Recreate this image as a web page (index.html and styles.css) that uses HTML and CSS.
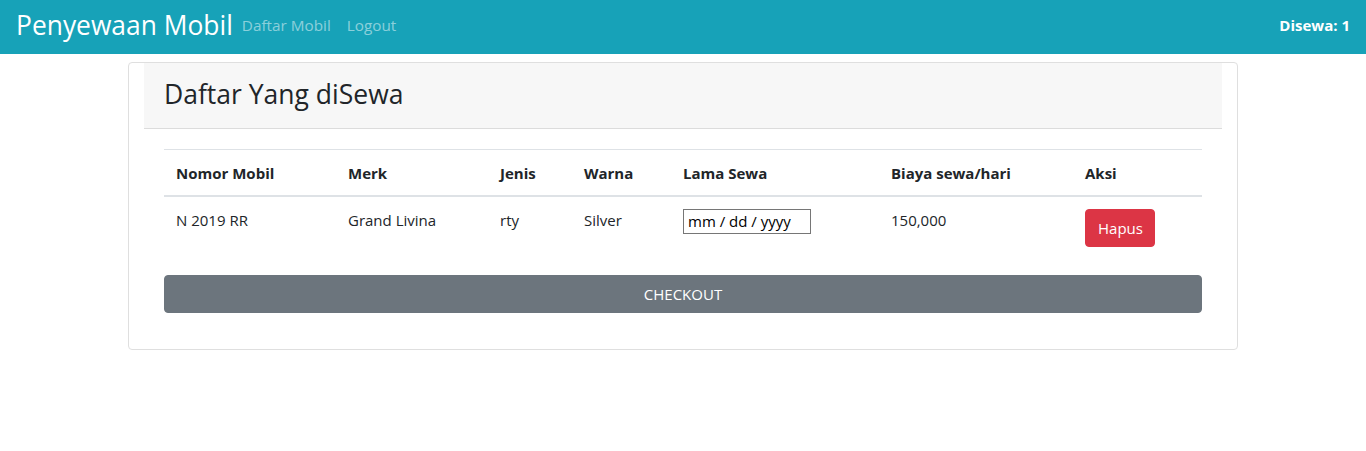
FILE: index.html
```html
<!DOCTYPE html>
<html lang="id">
<head>
<meta charset="utf-8">
<title>Penyewaan Mobil</title>
<link rel="stylesheet" href="styles.css">
</head>
<body>
<nav class="navbar">
  <a class="brand" href="#">Penyewaan Mobil</a>
  <a class="nav-link" href="#">Daftar Mobil</a>
  <a class="nav-link" href="#">Logout</a>
  <span class="spacer"></span>
  <span class="rented">Disewa: 1</span>
</nav>
<main class="container">
  <section class="card">
    <header class="card-header">
      <h3 class="card-title">Daftar Yang diSewa</h3>
    </header>
    <div class="card-body">
      <table class="table">
        <thead>
          <tr>
            <th class="c1">Nomor Mobil</th>
            <th class="c2">Merk</th>
            <th class="c3">Jenis</th>
            <th class="c4">Warna</th>
            <th class="c5">Lama Sewa</th>
            <th class="c6">Biaya sewa/hari</th>
            <th class="c7">Aksi</th>
          </tr>
        </thead>
        <tbody>
          <tr>
            <td>N 2019 RR</td>
            <td>Grand Livina</td>
            <td>rty</td>
            <td>Silver</td>
            <td><span class="date-input">mm / dd / yyyy</span></td>
            <td>150,000</td>
            <td><button class="btn btn-danger" type="button">Hapus</button></td>
          </tr>
        </tbody>
      </table>
      <button class="btn btn-secondary btn-block" type="button">CHECKOUT</button>
    </div>
  </section>
</main>
</body>
</html>
```

FILE: styles.css
```css
* { box-sizing: border-box; }
body {
  margin: 0;
  font-family: "Open Sans", "Noto Sans", sans-serif;
  font-size: 15px;
  color: #212529;
  background: #fff;
}
.navbar {
  display: flex;
  align-items: center;
  height: 54px;
  padding: 0 16px 4px;
  background: #17a2b8;
}
.brand {
  color: #fff;
  text-decoration: none;
  font-size: 26.4px;
  margin-right: 1px;
  line-height: 40px;
}
.nav-link {
  color: rgba(255,255,255,0.5);
  text-decoration: none;
  font-size: 15.3px;
  padding: 0 8px;
}
.spacer { flex: 1; }
.rented {
  color: #fff;
  font-weight: 700;
  font-size: 15px;
}
.container {
  width: 1110px;
  margin: 8px auto 0;
}
.card {
  border: 1px solid #dfdfdf;
  border-radius: 4px;
  padding: 0 15px 0;
}
.card-header {
  background: #f7f7f7;
  border-bottom: 1px solid #dcdcdc;
  height: 66px;
  display: flex;
  align-items: center;
  padding: 0 20px;
}
.card-title {
  margin: 0;
  font-weight: 400;
  font-size: 26.5px;
  position: relative;
  top: -2px;
}
.card-body {
  padding: 20px 20px 20px;
}
.table {
  width: 100%;
  border-collapse: collapse;
  table-layout: fixed;
}
.table th, .table td {
  text-align: left;
  padding: 12px;
  vertical-align: top;
}
.table th {
  font-weight: 700;
  line-height: 22px;
  padding-bottom: 11px;
  border-top: 1px solid #dee2e6;
  border-bottom: 2px solid #dee2e6;
}
.table td { line-height: 22px; }
.c1 { width: 172px; }
.c2 { width: 152px; }
.c3 { width: 84px; }
.c4 { width: 99px; }
.c5 { width: 208px; }
.c6 { width: 194px; }
.c7 { width: 129px; }
.date-input {
  display: inline-block;
  width: 128px;
  height: 25px;
  border: 1px solid #767676;
  padding: 0 4px;
  font-size: 15px;
  line-height: 23px;
  color: #000;
  vertical-align: top;
}
.btn {
  font-family: inherit;
  font-size: 15px;
  color: #fff;
  border: 1px solid transparent;
  border-radius: 4px;
  height: 38px;
  padding: 0 12px;
  cursor: pointer;
  vertical-align: top;
}
.btn-danger {
  background: #dc3545;
  border-color: #dc3545;
  width: 70px;
}
.btn-secondary {
  background: #6c757d;
  border-color: #6c757d;
}
.btn-block {
  display: block;
  width: 100%;
  margin: 16px 0 16px;
  height: 38px;
}
```
